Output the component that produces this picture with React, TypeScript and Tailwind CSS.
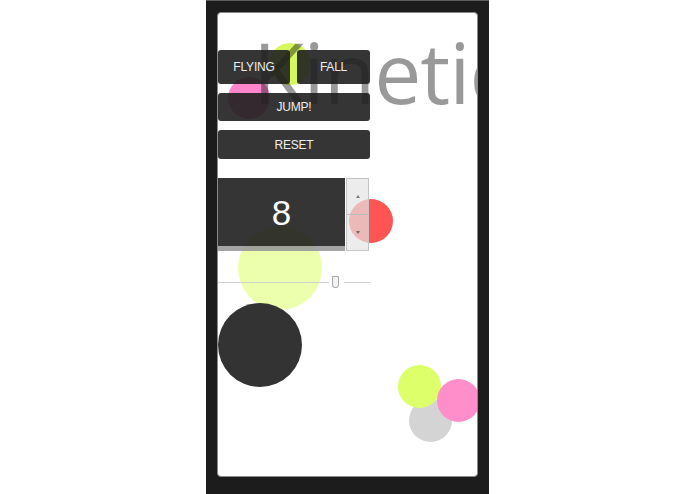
import React from "react";

const circles: { left: number; top: number; size: number; color: string }[] = [
  { left: 51, top: 30, size: 42, color: "#d6f85c" },
  { left: 10, top: 64, size: 42, color: "#ff86cc" },
  { left: 131, top: 186, size: 44, color: "#ff5454" },
  { left: 20, top: 213, size: 84, color: "#ebffad" },
  { left: 0, top: 290, size: 84, color: "#333333" },
  { left: 191, top: 386, size: 43, color: "#d4d4d4" },
  { left: 180, top: 352, size: 43, color: "#dcff6a" },
  { left: 219, top: 366, size: 43, color: "#ff8ecb" },
];

function Btn({ label, className }: { label: string; className: string }) {
  return (
    <div
      className={
        "flex items-center justify-center rounded-[3px] bg-[#1f1f1f]/90 text-[12px] text-[#eeeeee] tracking-[-0.2px] " +
        className
      }
      style={{ fontFamily: '"Liberation Sans", Arial, sans-serif' }}
    >
      {label}
    </div>
  );
}

export default function App() {
  return (
    <div className="flex h-[494px] w-[695px] justify-center bg-white">
      <div className="h-[494px] w-[283px] border-t border-[#5c5c5c] bg-[#1c1c1c] px-[11px] pt-[11px]">
        <div className="relative h-[465px] w-[261px] overflow-hidden rounded-[4px] border border-[#8a8a8a] bg-white">
          {circles.map((c, i) => (
            <div
              key={i}
              className="absolute rounded-full"
              style={{ left: c.left, top: c.top, width: c.size, height: c.size, background: c.color }}
            />
          ))}
          <div
            className="absolute left-[35px] top-[17px] whitespace-nowrap text-[84px] leading-none text-black/40 tracking-[-1px]"
            style={{ fontFamily: '"Open Sans", "Noto Sans", sans-serif' }}
          >
            Kinetic
          </div>

          <div className="relative z-10 flex w-[152px] flex-col pt-[37px]">
            <div className="flex h-[34px] gap-[7px]">
              <Btn label="FLYING" className="w-[72px]" />
              <Btn label="FALL" className="w-[73px]" />
            </div>
            <Btn label="JUMP!" className="mt-[9px] h-[28px] w-[152px]" />
            <Btn label="RESET" className="mt-[9px] h-[29px] w-[152px]" />

            <div className="mt-[19px] flex h-[73px]">
              <div className="flex w-[127px] flex-col">
                <div
                  className="flex h-[68px] items-center justify-center bg-[#1f1f1f]/90 text-[35px] leading-none text-white"
                  style={{ fontFamily: '"Liberation Sans", Arial, sans-serif' }}
                >
                  8
                </div>
                <div className="h-[5px] bg-[#9a9a9a]/90" />
              </div>
              <div className="ml-[1px] flex w-[23px] flex-col border border-[#c4c4c4] bg-[#e4e4e4]/70">
                <div className="flex flex-1 items-center justify-center border-b border-[#bdbdbd]">
                  <div className="h-0 w-0 border-x-[2px] border-b-[3px] border-x-transparent border-b-[#7a7a7a]" />
                </div>
                <div className="flex flex-1 items-center justify-center">
                  <div className="h-0 w-0 border-x-[2px] border-t-[3px] border-x-transparent border-t-[#6a6a6a]" />
                </div>
              </div>
            </div>

            <div className="mt-[25px] flex h-[12px] items-center">
              <div className="h-px w-[111px] bg-[#d0d0d0]" />
              <div className="ml-[3px] h-[12px] w-[7px] rounded-b-[4px] rounded-t-[1px] border border-[#a8a8a8] bg-[#f2f2f2]" />
              <div className="ml-[5px] h-px w-[26px] bg-[#d0d0d0]" />
            </div>
          </div>
        </div>
      </div>
    </div>
  );
}
